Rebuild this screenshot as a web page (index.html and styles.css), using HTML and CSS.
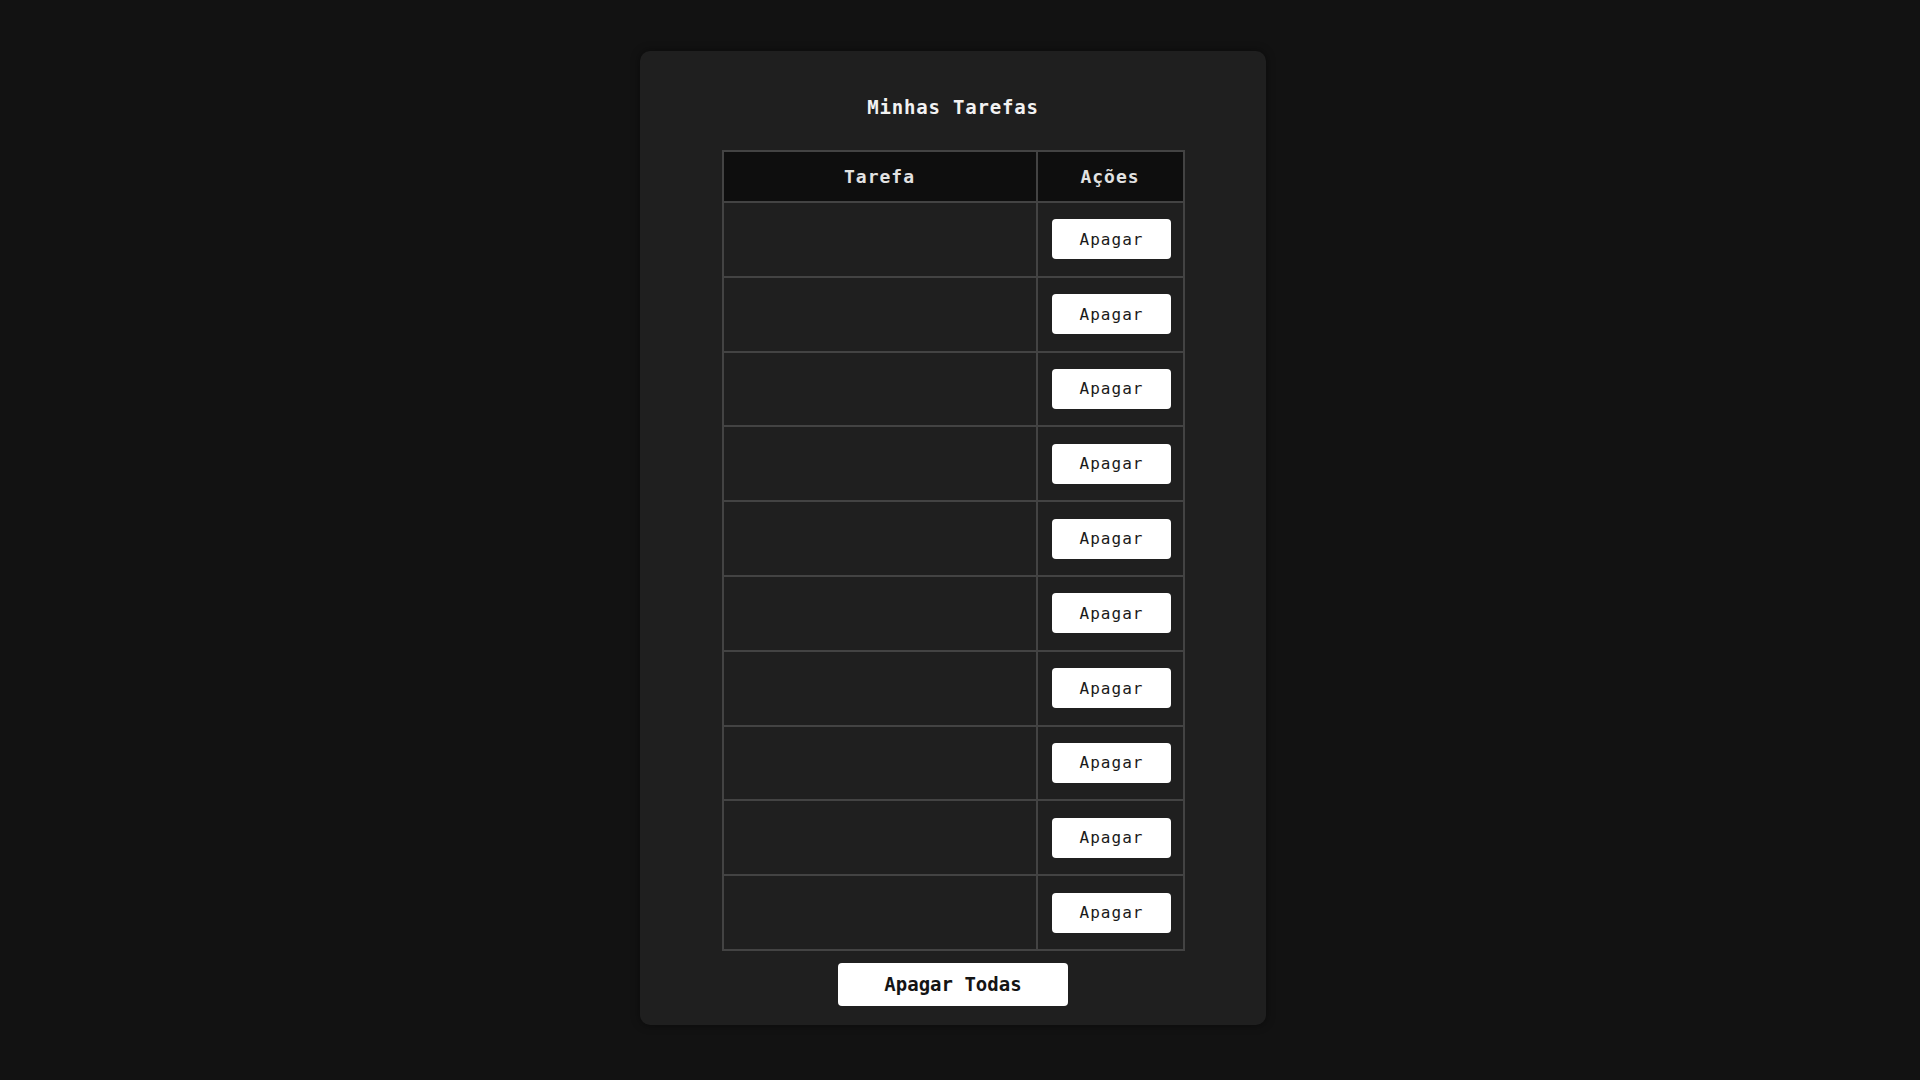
FILE: index.html
```html
<!DOCTYPE html>
<html lang="pt">
<head>
<meta charset="utf-8">
<title>Minhas Tarefas</title>
<link rel="stylesheet" href="styles.css">
</head>
<body>
<main class="page">
  <section class="card">
    <h1 class="title">Minhas Tarefas</h1>
    <table class="tasks">
      <thead>
        <tr><th class="col-task">Tarefa</th><th class="col-actions">Ações</th></tr>
      </thead>
      <tbody>
        <tr><td class="task"></td><td class="actions"><button class="btn-del">Apagar</button></td></tr>
        <tr><td class="task"></td><td class="actions"><button class="btn-del">Apagar</button></td></tr>
        <tr><td class="task"></td><td class="actions"><button class="btn-del">Apagar</button></td></tr>
        <tr><td class="task"></td><td class="actions"><button class="btn-del">Apagar</button></td></tr>
        <tr><td class="task"></td><td class="actions"><button class="btn-del">Apagar</button></td></tr>
        <tr><td class="task"></td><td class="actions"><button class="btn-del">Apagar</button></td></tr>
        <tr><td class="task"></td><td class="actions"><button class="btn-del">Apagar</button></td></tr>
        <tr><td class="task"></td><td class="actions"><button class="btn-del">Apagar</button></td></tr>
        <tr><td class="task"></td><td class="actions"><button class="btn-del">Apagar</button></td></tr>
        <tr><td class="task"></td><td class="actions"><button class="btn-del">Apagar</button></td></tr>
      </tbody>
    </table>
    <button class="btn-all">Apagar Todas</button>
  </section>
</main>
</body>
</html>
```
FILE: styles.css
```css
html, body {
  margin: 0;
  padding: 0;
  background: #121212;
  height: 100%;
}

body {
  font-family: "DejaVu Sans Mono", "Liberation Mono", monospace;
  color: #eeeeee;
}

.page {
  display: flex;
  justify-content: center;
  align-items: flex-start;
  padding: 51px 14px 0 0;
}

.card {
  width: 626px;
  box-sizing: border-box;
  background: #1f1f1f;
  border-radius: 10px;
  box-shadow: 0 0 10px rgba(0, 0, 0, 0.45);
  padding: 45px 0 19px;
  display: flex;
  flex-direction: column;
  align-items: center;
}

.title {
  margin: 0 0 32px;
  font-size: 19px;
  line-height: 22px;
  font-weight: bold;
  letter-spacing: 0.8px;
  color: #f2f2f2;
}

.tasks {
  width: 463px;
  table-layout: fixed;
  border-collapse: separate;
  border-spacing: 0;
  border: 1px solid #434343;
}

.tasks th,
.tasks td {
  border: 1px solid #434343;
  box-sizing: border-box;
}

.tasks th {
  background: #0e0e0e;
  color: #e2e2e2;
  font-size: 18px;
  line-height: 22px;
  font-weight: bold;
  letter-spacing: 1px;
  padding: 14px 6px 13px;
  text-align: center;
}

.col-actions {
  width: 147px;
}

.tasks td {
  background: #1f1f1f;
  height: 74.8px;
  padding: 0;
}

.actions {
  text-align: center;
  vertical-align: middle;
  padding: 16px 9px 16px 11px !important;
}

.btn-del {
  width: 119px;
  height: 40px;
  border: none;
  border-radius: 4px;
  background: #ffffff;
  color: #1a1a1a;
  font-family: "DejaVu Sans Mono", "Liberation Mono", monospace;
  font-size: 16px;
  letter-spacing: 1px;
  padding: 0 0 0 1px;
  display: block;
  margin: 0 auto;
}

.btn-all {
  margin-top: 12px;
  width: 230px;
  height: 43px;
  border: none;
  border-radius: 4px;
  background: #ffffff;
  color: #141414;
  font-family: "DejaVu Sans Mono", "Liberation Mono", monospace;
  font-size: 19px;
  font-weight: bold;
  padding: 0;
}
```
